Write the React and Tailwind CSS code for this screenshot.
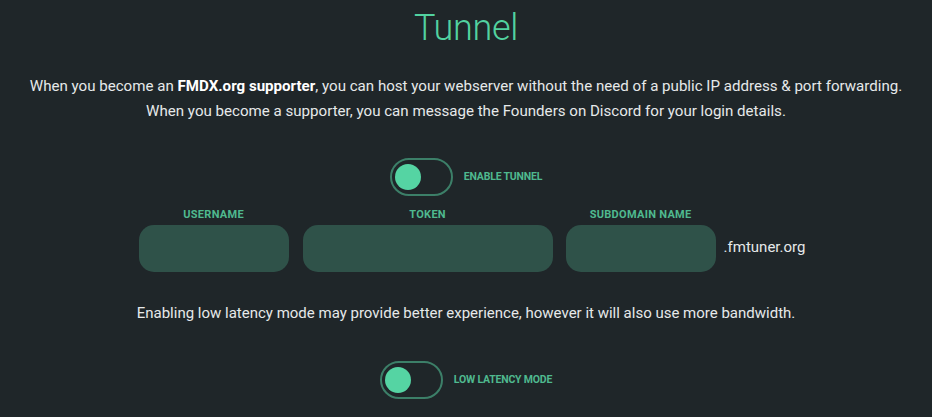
export default function App() {
  const font = { fontFamily: 'Roboto, "Noto Sans", sans-serif' };
  return (
    <div className="min-h-[417px] w-full bg-[#1f2629] text-[#e6e9ea]" style={font}>
      <div className="flex flex-col items-center pt-[6px]">
        <h2 className="text-[36px] font-light leading-[44px] tracking-[-0.3px] text-[#52d2a0]">Tunnel</h2>

        <div className="mt-[24px] text-center text-[15.1px] leading-[25px]">
          <p>
            When you become an <strong className="font-bold text-white">FMDX.org supporter</strong>, you can host your
            webserver without the need of a public IP address &amp; port forwarding.
          </p>
          <p>When you become a supporter, you can message the Founders on Discord for your login details.</p>
        </div>

        <Toggle label="Enable tunnel" className="mt-[34px]" />

        <div className="mt-[12px] flex items-end pl-[12px]">
          <Field label="Username" w="w-[150px]" />
          <Field label="Token" w="w-[250px]" className="ml-[14px]" />
          <Field label="Subdomain name" w="w-[150px]" className="ml-[13px]" />
          <span className="ml-[8px] pb-[14px] text-[15px] text-[#e6e9ea]">.fmtuner.org</span>
        </div>

        <p className="mt-[29px] text-[15px] leading-[25px]">
          Enabling low latency mode may provide better experience, however it will also use more bandwidth.
        </p>

        <Toggle label="Low latency mode" className="mt-[35px]" />
      </div>
    </div>
  );
}

function Toggle({ label, className = '' }) {
  return (
    <div className={`flex items-center gap-[11px] ${className}`}>
      <div className="flex h-[38px] w-[63px] items-center rounded-full border-2 border-[#3c7f68] px-[3px]">
        <span className="h-[26px] w-[26px] rounded-full bg-[#55d4a3]" />
      </div>
      <span className="text-[10.5px] font-bold uppercase tracking-[-0.2px] text-[#4fb98f]">{label}</span>
    </div>
  );
}

function Field({ label, w, className = '' }) {
  return (
    <div className={`flex flex-col items-center ${className}`}>
      <label className="mb-[4px] text-[11px] font-bold uppercase leading-[13px] tracking-[0.3px] text-[#4fb98f]">
        {label}
      </label>
      <input className={`h-[47px] ${w} rounded-[15px] bg-[#2f5249] px-3 text-white outline-none`} />
    </div>
  );
}
